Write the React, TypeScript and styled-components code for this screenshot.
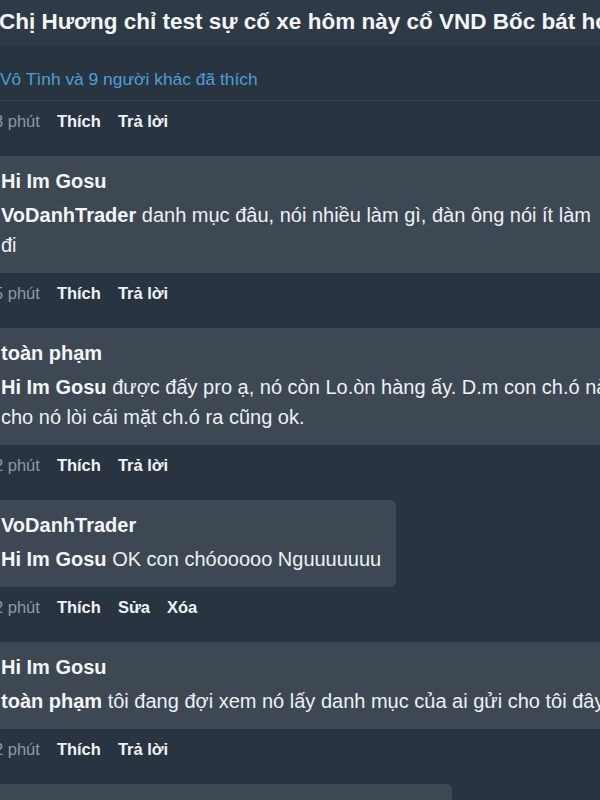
import styled, { createGlobalStyle } from 'styled-components';

const GlobalStyle = createGlobalStyle`
    html, body {
        margin: 0;
        padding: 0;
        background: #283440;
        overflow: hidden;
    }
    body {
        font-family: 'Liberation Sans', Arial, sans-serif;
        color: #eef1f4;
    }
`;

interface IComment {
    author: string;
    mention: string;
    lines: string[];
    time: string;
    actions: string[];
    full?: boolean;
    width?: number;
}

const comments: IComment[] = [
    {
        author: 'Hi Im Gosu',
        mention: 'VoDanhTrader',
        lines: [' danh mục đâu, nói nhiều làm gì, đàn ông nói ít làm', 'đi'],
        time: '5 phút',
        actions: ['Thích', 'Trả lời'],
        full: true,
    },
    {
        author: 'toàn phạm',
        mention: 'Hi Im Gosu',
        lines: [
            ' được đấy pro ạ, nó còn Lo.òn hàng ấy. D.m con ch.ó này',
            'cho nó lòi cái mặt ch.ó ra cũng ok.',
        ],
        time: '2 phút',
        actions: ['Thích', 'Trả lời'],
        full: true,
    },
    {
        author: 'VoDanhTrader',
        mention: 'Hi Im Gosu',
        lines: [' OK con chóooooo Nguuuuuuu'],
        time: '2 phút',
        actions: ['Thích', 'Sửa', 'Xóa'],
    },
    {
        author: 'Hi Im Gosu',
        mention: 'toàn phạm',
        lines: [' tôi đang đợi xem nó lấy danh mục của ai gửi cho tôi đây'],
        time: '2 phút',
        actions: ['Thích', 'Trả lời'],
        full: true,
    },
    {
        author: 'VoDanhTrader',
        mention: 'toàn phạm',
        lines: [' ok'],
        time: '1 phút',
        actions: ['Thích', 'Sửa', 'Xóa'],
        width: 458,
    },
];

export default function App() {
    return (
        <>
            <GlobalStyle />
            <Page>
                <TitleBar>
                    Chị Hương chỉ test sự cố xe hôm này cổ VND Bốc bát họ
                    mới chịu
                </TitleBar>
                <LikesRow>Vô Tình và 9 người khác đã thích</LikesRow>
                <MetaRow>
                    <Time>3 phút</Time>
                    <Action>Thích</Action>
                    <Action>Trả lời</Action>
                </MetaRow>
                <CommentList>
                    {comments.map((c, i) => (
                        <CommentItem key={i}>
                            <Bubble
                                $full={c.full}
                                style={c.width ? { width: c.width } : undefined}
                            >
                                <Author>{c.author}</Author>
                                <Body>
                                    <Mention>{c.mention}</Mention>
                                    {c.lines.map((line, j) => (
                                        <span key={j}>
                                            {j > 0 && <br />}
                                            {line}
                                        </span>
                                    ))}
                                </Body>
                            </Bubble>
                            <MetaRow>
                                <Time>{c.time}</Time>
                                {c.actions.map((a) => (
                                    <Action key={a}>{a}</Action>
                                ))}
                            </MetaRow>
                        </CommentItem>
                    ))}
                </CommentList>
            </Page>
        </>
    );
}

const Page = styled.div`
    margin-left: -6px;
    width: 660px;
    display: flex;
    flex-direction: column;
    & > * {
        flex-shrink: 0;
    }
`;

const TitleBar = styled.div`
    height: 44px;
    line-height: 44px;
    padding-left: 5px;
    background: #2e3a45;
    font-size: 22.5px;
    font-weight: 700;
    color: #f4f6f8;
    white-space: nowrap;
    overflow: hidden;
`;

const LikesRow = styled.div`
    box-sizing: border-box;
    height: 57px;
    padding: 14px 0 0 6px;
    display: flex;
    align-items: center;
    border-top: 1px solid rgba(255, 255, 255, 0.03);
    border-bottom: 1px solid rgba(255, 255, 255, 0.06);
    font-size: 17.4px;
    color: #4a9fd9;
`;

const MetaRow = styled.div`
    margin-top: 8px;
    height: 24px;
    display: flex;
    align-items: center;
    gap: 17px;
    font-size: 16.5px;
    white-space: nowrap;
`;

const Time = styled.span`
    color: #8f99a3;
`;

const Action = styled.span`
    color: #f0f2f4;
    font-weight: 700;
`;

const CommentList = styled.div`
    display: flex;
    flex-direction: column;
`;

const CommentItem = styled.div`
    margin-top: 23px;
    display: flex;
    flex-direction: column;
    align-items: flex-start;
`;

const Bubble = styled.div<{ $full?: boolean }>`
    box-sizing: border-box;
    width: ${(p) => (p.$full ? '100%' : 'auto')};
    padding: 10px 15px 13px 7px;
    background: #3d4852;
    border-radius: 5px;
    white-space: nowrap;
    font-size: 20px;
    line-height: 30px;
`;

const Author = styled.div`
    font-weight: 700;
    color: #f4f6f8;
`;

const Body = styled.div`
    margin-top: 4px;
    color: #eef1f4;
`;

const Mention = styled.span`
    font-weight: 700;
    color: #f4f6f8;
`;
